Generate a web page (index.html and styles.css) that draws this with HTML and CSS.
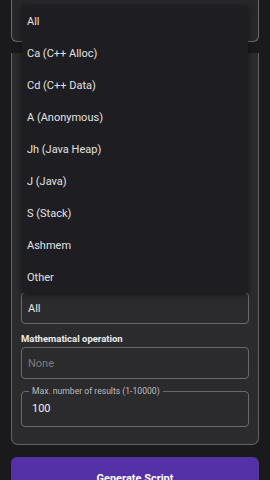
FILE: index.html
```html
<!DOCTYPE html>
<html>
<head>
<meta charset="utf-8">
<link rel="stylesheet" href="styles.css">
</head>
<body>
<div class="page">
  <div class="topfield"></div>
  <div class="card">
    <div class="spacer"></div>
    <div class="select"><span>All</span></div>
    <div class="label">Mathematical operation</div>
    <div class="select placeholder"><span>None</span></div>
    <fieldset class="outlined">
      <legend>Max. number of results (1-10000)</legend>
      <span class="value">100</span>
    </fieldset>
  </div>
  <button class="btn">Generate Script</button>
</div>
<ul class="menu">
  <li>All</li>
  <li>Ca (C++ Alloc)</li>
  <li>Cd (C++ Data)</li>
  <li>A (Anonymous)</li>
  <li>Jh (Java Heap)</li>
  <li>J (Java)</li>
  <li>S (Stack)</li>
  <li>Ashmem</li>
  <li>Other</li>
</ul>
</body>
</html>
```
FILE: styles.css
```css
html, body {
  margin: 0;
  padding: 0;
  background: #1a191c;
  font-family: Roboto, "Noto Sans", sans-serif;
  color: #e4e4e4;
  overflow: hidden;
  height: 480px;
}
.page {
  padding: 0 11px;
}
.topfield {
  height: 42px;
  box-sizing: border-box;
  background: #272729;
  border: 1px solid #6b6b6b;
  border-top: none;
  border-radius: 0 0 6px 6px;
  margin-bottom: 11px;
}
.card {
  background: #2b2b2d;
  border: 1px solid #626262;
  border-top: none;
  border-radius: 0 0 7px 7px;
  padding: 0 9px 17px;
}
.spacer {
  height: 239px;
}
.select {
  height: 32px;
  box-sizing: border-box;
  border: 1px solid #6a6a6a;
  border-radius: 4px;
  display: flex;
  align-items: center;
  padding-left: 6px;
  font-size: 11px;
  color: #e6e6e6;
}
.select.placeholder {
  color: #7c7c7c;
}
.label {
  font-size: 9.5px;
  font-weight: 700;
  color: #ececec;
  margin: 9px 0 3px;
  line-height: 11px;
}
.outlined {
  margin: 7px 0 0;
  padding: 0 10px;
  height: 41px;
  box-sizing: border-box;
  border: 1px solid #6a6a6a;
  border-radius: 4px;
  display: block;
  min-width: 0;
}
.outlined legend {
  font-size: 8.6px;
  color: #bdbdbd;
  padding: 0 3px;
  margin-left: -3px;
  line-height: 10px;
}
.outlined .value {
  display: block;
  font-size: 11px;
  color: #eeeeee;
  margin-top: 6px;
  line-height: 14px;
}
.btn {
  display: block;
  width: 100%;
  margin-top: 12px;
  height: 44px;
  border: none;
  border-radius: 6px;
  background: #5531a7;
  color: #ffffff;
  font-family: Roboto, sans-serif;
  font-weight: 700;
  font-size: 11px;
  padding-top: 0;
}
.menu {
  position: absolute;
  left: 22px;
  top: 5px;
  width: 226px;
  margin: 0;
  padding: 0;
  list-style: none;
  background: #1e1d21;
  box-shadow: 0 2px 6px rgba(0,0,0,0.5);
  border-radius: 2px;
}
.menu li {
  height: 32px;
  line-height: 33px;
  padding-left: 5px;
  font-size: 11px;
  color: #e2e2e2;
}
```
